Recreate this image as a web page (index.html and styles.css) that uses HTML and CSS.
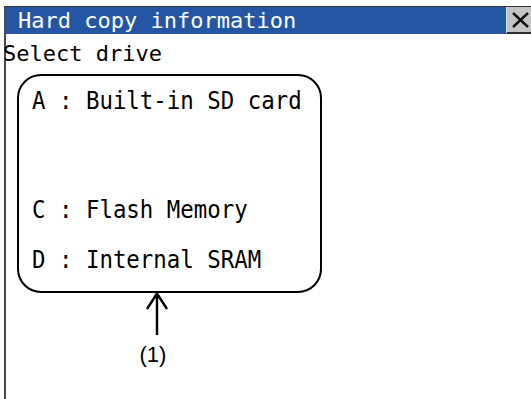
FILE: index.html
```html
<!DOCTYPE html>
<html lang="en">
<head>
    <meta charset="UTF-8">
    <meta name="viewport" content="width=device-width, initial-scale=1.0">
    <title>Hard copy information</title>
    <link rel="stylesheet" href="styles.css">
</head>
<body>
    <div class="window">
        <div class="titlebar">
            <div class="title">Hard copy information</div>
            <div class="close">
                <svg width="26" height="26" viewBox="0 0 26 26">
                    <path d="M6 6 L21 20 M21 6 L6 20" stroke="#111" stroke-width="2.4" fill="none"/>
                </svg>
            </div>
        </div>

        <p class="prompt">Select drive</p>

        <div class="drive-box">
            <div class="drive drive-first"><span>A : Built-in SD card</span></div>
            <div class="drive"><span>C : Flash Memory</span></div>
            <div class="drive"><span>D : Internal SRAM</span></div>
        </div>

        <!-- callout under the drive list -->
        <div class="callout">
            <svg width="24" height="43" viewBox="0 0 24 43">
                <path d="M12 1 L12 43 M2 17 L12 1.5 L22 17" stroke="#000" stroke-width="2.4" fill="none"/>
            </svg>
            <div class="callout-label">(1)</div>
        </div>
    </div>
</body>
</html>
```

FILE: styles.css
```css
body {
    margin: 0;
    background: #fff;
    font-family: "DejaVu Sans Mono", monospace;
    color: #000;
}
.window {
    margin: 6px 0 0 4px;
    border-left: 2px solid #4a4a4a;
    border-top: 1px solid #333;
    height: 392px;
}
.titlebar {
    display: flex;
    height: 27px;
}
.title {
    flex: 1;
    background: #2456a4;
    color: #fff;
    font-size: 22px;
    line-height: 27px;
    padding-left: 12px;
    white-space: nowrap;
}
.close {
    width: 25px;
    background: #c4c4c4;
    border-left: 1px solid #e6e6e6;
    border-bottom: 2px solid #303030;
    box-sizing: border-box;
}
.close svg {
    display: block;
}
.prompt {
    margin: 7px 0 0 -3px;
    font-size: 22px;
    line-height: 26px;
}
.drive-box {
    margin: 7px 0 0 11px;
    width: 305px;
    height: 219px;
    box-sizing: border-box;
    border: 2px solid #000;
    border-radius: 24px;
    padding: 12px 0 0 13px;
}
.drive {
    font-size: 22.4px;
    line-height: 26px;
    white-space: nowrap;
    margin-bottom: 24px;
}
.drive span {
    display: inline-block;
    transform: scaleY(1.1);
    transform-origin: 0 80%;
}
.drive-first {
    margin-bottom: 83px;
}
.callout {
    margin: -1px 0 0 127px;
    width: 40px;
    display: flex;
    flex-direction: column;
    align-items: center;
}
.callout svg {
    display: block;
    margin-left: 8px;
}
.callout-label {
    margin-top: 7px;
    font-family: "Liberation Sans", Arial, sans-serif;
    font-size: 22px;
    line-height: 26px;
}
```
